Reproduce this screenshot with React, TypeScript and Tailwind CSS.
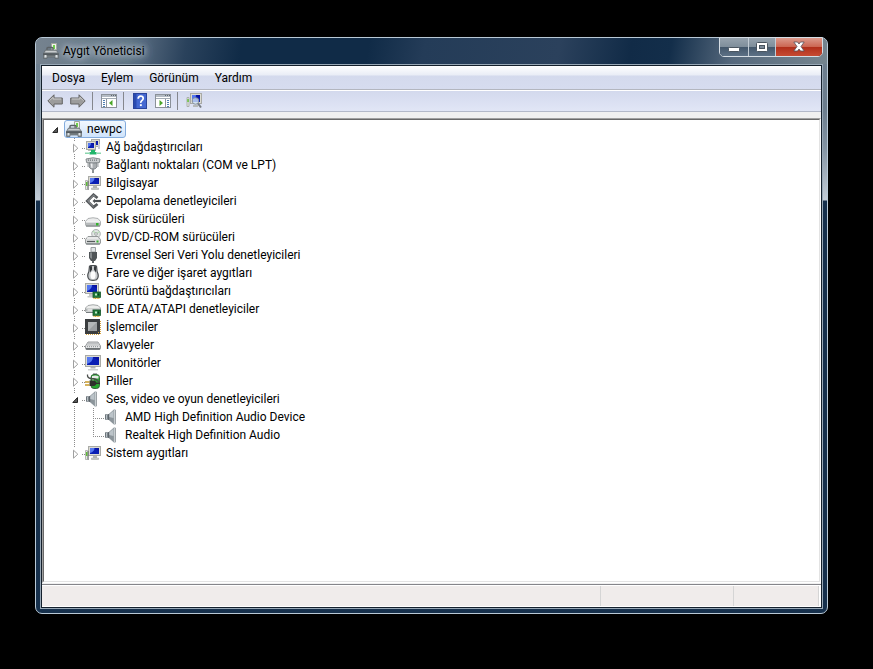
import { useState, type ReactNode } from 'react';

/* ---------- icons ---------- */

function Icon({ children, w = 16, h = 16 }: { children: ReactNode; w?: number; h?: number }) {
  return (
    <svg width={w} height={h} viewBox={`0 0 ${w} ${h}`} className="block shrink-0" aria-hidden="true">
      {children}
    </svg>
  );
}

function Screen({ x, y, w, h }: { x: number; y: number; w: number; h: number }) {
  return (
    <g>
      <rect x={x} y={y} width={w} height={h} fill="#dcdcd4" stroke="#a9aaa6" strokeWidth="1" />
      <rect x={x + 1.5} y={y + 1.5} width={w - 3} height={h - 3} fill="#0a1fb4" />
      <path d={`M${x + 1.5} ${y + 1.5}h${(w - 3) * 0.5}q0 ${(h - 3) * 0.6} -${(w - 3) * 0.5} ${h - 4}z`} fill="#5578f0" />
      <path d={`M${x + w * 0.5} ${y + 1.5}h${w * 0.5 - 1.5}v${h * 0.35}z`} fill="#0812a0" />
    </g>
  );
}

const Toolbox = () => (
  <Icon>
    <path d="M8.500.5h5v9h-5z" fill="#f1f3ec" stroke="#a3a69f" />
    <rect x="10" y="2" width="2" height="4" fill="#6fd04a" />
    <path d="M4 8V5.500q0-1 1-1h4q1 0 1 1V8" fill="none" stroke="#5c6266" strokeWidth="1.400" />
    <path d="M2.500 7h10.500l2.500 3.500H.5z" fill="#9da3a6" stroke="#666c70" strokeWidth=".8" />
    <path d="M0 10.300h16v2.200H0z" fill="#555c60" />
    <path d="M2.500 8.500h11" stroke="#c9cdcf" />
    <path d="M.5 12.500h15v3h-3.500v-1.500h-8v1.500H.5z" fill="#7f878b" stroke="#62686c" strokeWidth=".7" />
    <rect x="1.500" y="12" width="2" height="2.500" fill="#dfe3e5" />
    <rect x="12.500" y="12" width="2" height="2.500" fill="#dfe3e5" />
  </Icon>
);

const Network = () => (
  <Icon>
    <Screen x={6.5} y={0.5} w={8} h={7} />
    <rect x="13" y="5" width="2" height="5" fill="#c6c9d8" />
    <Screen x={1.5} y={2.5} w={9} h={8} />
    <rect x="3" y="11" width="8" height="1" fill="#b9bbb8" />
    <path d="M6 11h4v2H6zM4.500 13h7v2.500h-7z" fill="#20b56a" />
    <rect x="0" y="13.500" width="4" height="1.500" fill="#8bd5ad" />
    <rect x="12" y="13.500" width="4" height="1.500" fill="#8bd5ad" />
  </Icon>
);

const Port = () => (
  <Icon>
    <path d="M1 2q7-2.500 14 0l-.6 3.500q-6.400 1.500-12.800 0z" fill="#c9ccce" stroke="#7d8285" strokeWidth=".9" />
    <path d="M3 3.200h10" stroke="#70767a" strokeWidth="1.200" strokeDasharray="1 1" />
    <path d="M4 6h8v4l-2 2H6l-2-2z" fill="#a9adb0" stroke="#777c80" strokeWidth=".8" />
    <path d="M5.500 6.500h2v4.500h-1z" fill="#eff0f1" />
    <path d="M7 12h2v4H7z" fill="#8d9295" />
    <path d="M3 6v4M13 6v4" stroke="#a0a4a7" />
  </Icon>
);

const Computer = () => (
  <Icon>
    <Screen x={3.5} y={1.5} w={12} h={9} />
    <path d="M8 11h4v2H8z" fill="#b5b8b5" />
    <path d="M6.500 13h7v1.500h-7z" fill="#d0d2cf" stroke="#a6a9a6" strokeWidth=".6" />
    <path d="M.5 5.500h2v9h-2z" fill="#e6e8e4" stroke="#a6a9a5" strokeWidth=".8" />
    <rect x="1" y="7" width="1.500" height="4" fill="#5fbd35" />
    <rect x="2.700" y="6" width="1" height="9" fill="#74787a" />
  </Icon>
);

const Storage = () => (
  <Icon>
    <path d="M12.500 5L8.500 1.800 2.300 8l6.200 6.200L12.500 11" fill="none" stroke="#55595c" strokeWidth="2.800" strokeLinejoin="miter" />
    <path d="M10.500 3.800L8.500 2.200 2.700 8l5.800 5.800" fill="none" stroke="#a1a5a8" strokeWidth=".8" />
    <path d="M9 8h7" stroke="#4d5154" strokeWidth="2.200" />
    <path d="M10 5.800V10.200L7.500 8z" fill="#4d5154" />
  </Icon>
);

const Disk = () => (
  <Icon>
    <path d="M3 7.500q5-1.500 10 0l2.500 3v3.500q-.3 1-1.500 1H2q-1.200 0-1.500-1v-3.500z" fill="#eceded" stroke="#a5a8a9" strokeWidth=".9" />
    <path d="M.8 11.200h14.400v3H.8z" fill="#b7bbbc" />
    <path d="M1 11h14" stroke="#f7f7f7" />
    <path d="M1 15h14" stroke="#6f7476" />
    <rect x="11" y="12" width="2.500" height="2.500" fill="#35b32c" />
  </Icon>
);

const Optical = () => (
  <Icon>
    <circle cx="11" cy="4.800" r="4.300" fill="#e2e6e4" stroke="#a4a9a8" strokeWidth=".9" />
    <path d="M11 5L8 1.800M11 5l3.500-2.500" stroke="#b7ddb6" strokeWidth="1.200" />
    <circle cx="11" cy="5" r="1.300" fill="#fff" stroke="#8d9292" strokeWidth=".8" />
    <path d="M3 7.500h10l2.500 3v3.500l-1 1h-13l-1-1v-3.500z" fill="#d8dada" stroke="#8d9192" strokeWidth=".9" />
    <path d="M2 9h11" stroke="#f8f8f8" />
    <path d="M2 12.500h8" stroke="#54595b" strokeWidth="1.200" />
    <rect x="11.500" y="11.500" width="2" height="2" fill="#35b32c" />
    <path d="M1 15h14" stroke="#6f7476" />
  </Icon>
);

const Usb = () => (
  <Icon>
    <path d="M6 .5h4.500V5H6z" fill="#dfe3e5" stroke="#9a9ea1" />
    <path d="M4 5h8v6l-2 3H6l-2-3z" fill="#4f5457" />
    <path d="M5 5.500h2V12l-2-1.500z" fill="#84898c" />
    <path d="M7 14h2v2H7z" fill="#5e6366" />
  </Icon>
);

const Mouse = () => (
  <Icon>
    <path d="M4.500 1.200Q8-.6 11.500 1.200l.6 5.300q2.600 5.500-.6 8.200-3.500 1.300-7 0-3.200-2.700-.6-8.200z" fill="#c9ccce" stroke="#4a4e51" strokeWidth="1.200" />
    <path d="M5 1.300h2l.3 3L5 7.500zM11 1.300H9l-.3 3L11 7.500z" fill="#33373a" />
    <ellipse cx="8" cy="10.300" rx="2.500" ry="4" fill="#fdfdfd" />
    <rect x="7.400" y="2" width="1.200" height="3" fill="#d5d8da" />
  </Icon>
);

const Card = () => (
  <g>
    <rect x="8" y="9" width="7.500" height="5.500" fill="#1f7a38" stroke="#14562a" strokeWidth=".8" />
    <rect x="10" y="10.500" width="2" height="2" fill="#bfe8c6" />
    <rect x="13" y="10.500" width="1.200" height="2" fill="#0c3d1b" />
    <path d="M8.500 15.300h6.500" stroke="#d9a520" strokeWidth="1.200" strokeDasharray="1 .6" />
  </g>
);

const Display = () => (
  <Icon>
    <Screen x={0.5} y={0.5} w={13} h={10} />
    <path d="M4 11h5v2H4zM2.500 13h7v1.500h-7z" fill="#c6c9c7" />
    <Card />
  </Icon>
);

const Ide = () => (
  <Icon>
    <path d="M3 4.500q5-1.500 10 0L15.500 7v3.500l-1 1h-13l-1-1V7z" fill="#ecedec" stroke="#9b9e9f" strokeWidth=".9" />
    <path d="M.9 7.500h14.200v3H.9z" fill="#b2b6b7" />
    <path d="M2.500 9h5" stroke="#f5f5f5" strokeWidth="1.300" />
    <path d="M1 11.500h14" stroke="#777c7e" />
    <Card />
  </Icon>
);

const Cpu = () => (
  <Icon>
    <path d="M1 15.300h14M15.300 2v13" stroke="#d3a13e" strokeWidth="1.400" strokeDasharray="1 1" />
    <path d="M0 0h15v15H0z" fill="#3a3d3f" />
    <path d="M3 3h9v9H3z" fill="#9c9fa1" />
    <path d="M3 3h9L3 12z" fill="#b4b7b8" />
    <rect x="13" y="13" width="1" height="1" fill="#d3a13e" />
  </Icon>
);

const Keyboard = () => (
  <Icon>
    <path d="M3 5h10l2.500 4v2.500q-.2 1-1 1h-13q-.8 0-1-1V9z" fill="#e4e5e6" stroke="#8e9294" strokeWidth=".9" />
    <path d="M3.500 6.300h9.500M2.500 8h11.500M2 9.700h12.500" stroke="#7e8386" strokeWidth=".9" strokeDasharray="1 1" />
    <path d="M1 11.800h14" stroke="#4f5558" strokeWidth="1.200" />
  </Icon>
);

const Monitor = () => (
  <Icon>
    <Screen x={0.5} y={0.5} w={15} h={11} />
    <path d="M5.500 12h5v1.500h-5z" fill="#b1b5b4" />
    <path d="M3 14h10v1.500H3z" fill="#cdd0ce" />
  </Icon>
);

const Battery = () => (
  <Icon>
    <rect x="8" y="0" width="4" height="2" fill="#a8acae" />
    <rect x="6" y="1.500" width="8.500" height="14" rx="3" fill="#27a82f" stroke="#2f5a34" strokeWidth=".9" />
    <path d="M7 3q3-1 6.500 0v2.500H7z" fill="#e6ebe6" />
    <path d="M8 5v8" stroke="#a6eaa0" strokeWidth="1.300" />
    <path d="M2.500 1.500Q2 5 6 5.500q6 0 8 4" fill="none" stroke="#4a4d4b" strokeWidth="1.300" />
    <path d="M4.500 7.500h4q3 .5 3 2.800T8.500 13h-4z" fill="#2e312b" />
    <path d="M0 9h4.500M0 12h4.500" stroke="#c79a2c" strokeWidth="1.500" />
    <path d="M11 10.300h4" stroke="#2e312b" strokeWidth="1.400" />
  </Icon>
);

const Speaker = () => (
  <Icon>
    <path d="M1 5.300h4v5.400H1z" fill="#6c757b" />
    <path d="M2 6h1.200v4H2z" fill="#b9c0c5" />
    <path d="M4.500 5.300L10.500 0v16l-6-5.300z" fill="#8c959b" />
    <path d="M5 5.500L9.500 1.700V9L5 8z" fill="#bcc4c9" />
    <path d="M4.700 5v6" stroke="#4b5359" strokeWidth=".8" />
    <path d="M10.500 0v16" stroke="#c9cfd2" strokeWidth="1.200" />
    <path d="M11.500.8v14.500" stroke="#848c91" strokeWidth=".8" />
  </Icon>
);

const Arrow = ({ flip }: { flip?: boolean }) => (
  <Icon w={16} h={14}>
    <g transform={flip ? 'matrix(-1 0 0 1 16 0)' : undefined}>
      <path d="M.8 7L7 .8v3.200h8.300v6H7v3.200z" fill="#9c9c9c" stroke="#646464" />
      <path d="M2.500 6.700L6 3.200v1.800h8.200" fill="none" stroke="#c9c9c9" />
    </g>
  </Icon>
);

const Pane = ({ right }: { right?: boolean }) => (
  <Icon w={16} h={14}>
    <rect x=".5" y=".5" width="15" height="13" fill="#fff" stroke="#8b9199" />
    <rect x="1" y="1" width="14" height="2" fill="#b4bbc4" />
    <path d="M10 1.500h5" stroke="#5d6670" strokeDasharray="1 1" />
    <path d="M1 4.500h14" stroke="#a3abb5" />
    {right ? (
      <g>
        <path d="M10.500 5v8" stroke="#8e96a0" />
        <path d="M12 6.500h2M12 8.500h2M12 10.500h2M12 12.500h2" stroke="#4f7fb5" />
        <path d="M4.500 6v6L8 9z" fill="#4ba62a" />
      </g>
    ) : (
      <g>
        <path d="M5.500 5v8" stroke="#8e96a0" />
        <path d="M2 6.500h2M2 8.500h2M2 10.500h2M2 12.500h2" stroke="#4f7fb5" />
        <path d="M11.500 6v6L8 9z" fill="#4ba62a" />
      </g>
    )}
  </Icon>
);

const Help = () => (
  <Icon w={14} h={16}>
    <rect x=".5" y=".5" width="13" height="15" fill="#4468d2" stroke="#2a449c" />
    <path d="M1 1h2.500v14H1z" fill="#2b4bb0" />
    <path d="M5.200 5.800Q5.200 3.200 7.700 3.200t2.500 2.200q0 1.200-1.400 2.200-1.100.8-1 2.300" fill="none" stroke="#fff" strokeWidth="1.700" />
    <rect x="6.900" y="11.200" width="1.900" height="1.900" fill="#fff" />
  </Icon>
);

const Scan = () => (
  <Icon>
    <Screen x={4.5} y={0.5} w={11} h={10} />
    <path d="M7 12h5v2H7z" fill="#b7bab9" />
    <path d="M1 4.500h2v9H1z" fill="#e6e8e4" stroke="#a0a39f" strokeWidth=".8" />
    <rect x="1.300" y="6" width="1.500" height="3" fill="#67c23a" />
    <circle cx="9.500" cy="8" r="3.300" fill="#cfe4f7" fillOpacity=".8" stroke="#8b949c" />
    <path d="M12 10.500l3 4" stroke="#777d83" strokeWidth="2" />
  </Icon>
);

/* ---------- tree ---------- */

type Node = { label: string; icon: () => ReactNode; children?: string[] };

const nodes: Node[] = [
  { label: 'Ağ bağdaştırıcıları', icon: Network },
  { label: 'Bağlantı noktaları (COM ve LPT)', icon: Port },
  { label: 'Bilgisayar', icon: Computer },
  { label: 'Depolama denetleyicileri', icon: Storage },
  { label: 'Disk sürücüleri', icon: Disk },
  { label: 'DVD/CD-ROM sürücüleri', icon: Optical },
  { label: 'Evrensel Seri Veri Yolu denetleyicileri', icon: Usb },
  { label: 'Fare ve diğer işaret aygıtları', icon: Mouse },
  { label: 'Görüntü bağdaştırıcıları', icon: Display },
  { label: 'IDE ATA/ATAPI denetleyiciler', icon: Ide },
  { label: 'İşlemciler', icon: Cpu },
  { label: 'Klavyeler', icon: Keyboard },
  { label: 'Monitörler', icon: Monitor },
  { label: 'Piller', icon: Battery },
  {
    label: 'Ses, video ve oyun denetleyicileri',
    icon: Speaker,
    children: ['AMD High Definition Audio Device', 'Realtek High Definition Audio'],
  },
  { label: 'Sistem aygıtları', icon: Computer },
];

const OpenMark = () => (
  <Icon w={8} h={8}>
    <path d="M5.500 1.500v5H.8z" fill="#595959" stroke="#262626" />
  </Icon>
);

/* Expander of a category row, with the dotted stem that joins it to its neighbours. */
const Expander = ({ open, last }: { open: boolean; last: boolean }) => (
  <Icon w={8} h={18}>
    <path d={last ? 'M2.500 0v1M2.500 2v1' : 'M2.500 0v1M2.500 2v1M2.500 16v1'} stroke="#8c8c8c" />
    {open ? (
      <path d="M5.500 7.500v5H.8z" fill="#595959" stroke="#262626" />
    ) : (
      <path d="M1.500 6.200v8L5.800 10.200z" fill="#fff" stroke="#a0a0a0" />
    )}
  </Icon>
);

const Dots = ({ w, d }: { w: number; d: string }) => (
  <Icon w={w} h={18}>
    <path d={d} stroke="#8c8c8c" strokeDasharray="1 1" fill="none" />
  </Icon>
);

function Branch({ node, last }: { node: Node; last: boolean }) {
  const [open, setOpen] = useState(Boolean(node.children));
  const Glyph = node.icon;
  return (
    <li>
      <div className="flex h-[18px] items-center">
        <button
          type="button"
          aria-label={node.label}
          aria-expanded={open}
          onClick={() => setOpen(!open)}
          className="w-2.5"
        >
          <Expander open={open} last={last} />
        </button>
        <Dots w={3} d="M0 10.5h3" />
        <Glyph />
        <span className="pl-[5px]">{node.label}</span>
      </div>
      {open && node.children && (
        <ul>
          {node.children.map((child, i) => (
            <li key={child} className="flex h-[18px] items-center pl-0.5">
              <Dots
                w={30}
                d={i === node.children!.length - 1 ? 'M.5 0v18M19.5 0v10M19 10.5h11' : 'M.5 0v18M19.5 0v18M19 10.5h11'}
              />
              <Speaker />
              <span className="pl-[5px]">{child}</span>
            </li>
          ))}
        </ul>
      )}
    </li>
  );
}

/* ---------- window ---------- */

const Separator = () => <span className="mr-1 ml-0.5 h-[18px] w-px bg-[#85878d]" />;

function Tool({ label, children }: { label: string; children: ReactNode }) {
  return (
    <button type="button" aria-label={label} className="flex h-5 w-[22px] items-center justify-center">
      {children}
    </button>
  );
}

export default function App() {
  return (
    <div className="flex min-h-screen bg-black pt-[37px] pr-[45px] pb-[55px] pl-[35px] font-[Roboto,'Open_Sans',sans-serif] text-xs leading-[18px] text-black">
      <main className="flex flex-1 flex-col rounded-[7px] border border-[#b9c9d6] bg-[#16304c] bg-[linear-gradient(180deg,#6f8090_0,#6c7d8d_70px,#8494a3_110px,#c3ccd6_162px,#16304c_163px)]">
        <header className="flex h-[26px] items-start justify-between rounded-t-[6px] bg-[linear-gradient(100deg,#76838f_0%,#5f7184_12%,#2a425c_19%,#102b47_26%,#102b47_42%,#243c58_49%,#2b415c_66%,#112b47_75%,#132e4a_80%,#56697d_88%,#75858f_100%)] pl-[7px]">
          <div className="flex items-center gap-1 pt-1">
            <Toolbox />
            <h1 className="font-normal [text-shadow:0_0_5px_#b4c0ca,0_0_8px_#b4c0ca,0_0_10px_#aab6c1,0_0_14px_#aab6c1]">Aygıt Yöneticisi</h1>
          </div>
          <div className="mr-1 -mt-px flex h-5 rounded-b-[5px] border border-[#d5dde4] bg-[#1c2b3a]">
            <button
              type="button"
              aria-label="Simge durumuna küçült"
              className="flex w-[29px] items-center justify-center rounded-bl-[4px] border-r border-[#c2ccd5] bg-[linear-gradient(180deg,#96a3ae_0%,#7f8e9b_48%,#42566a_50%,#5d7186_100%)]"
            >
              <Icon w={12} h={12}>
                <rect x=".5" y="6.500" width="11" height="4" rx="1" fill="#fff" stroke="#4a5560" />
              </Icon>
            </button>
            <button
              type="button"
              aria-label="Ekranı kapla"
              className="flex w-[27px] items-center justify-center border-r border-[#c2ccd5] bg-[linear-gradient(180deg,#96a3ae_0%,#7f8e9b_48%,#42566a_50%,#5d7186_100%)]"
            >
              <Icon w={12} h={11}>
                <rect x=".5" y=".5" width="11" height="9" rx="1" fill="#fff" stroke="#4a5560" />
                <rect x="3.500" y="3.500" width="5" height="3" fill="#7c8a98" stroke="#4a5560" />
              </Icon>
            </button>
            <button
              type="button"
              aria-label="Kapat"
              className="flex w-[46px] items-center justify-center rounded-br-[4px] bg-[linear-gradient(180deg,#dc9a8c_0%,#cc6753_48%,#b02e1a_50%,#c64a32_100%)]"
            >
              <Icon w={12} h={12}>
                <path d="M.8 1h3.700L6 3l1.500-2h3.700L8 5.500 11.200 10H7.500L6 8l-1.500 2H.8L4 5.500z" fill="#fff" stroke="#54505a" strokeWidth=".8" />
              </Icon>
            </button>
          </div>
        </header>

        <section className="mx-1 mb-1 flex flex-1 flex-col border border-[#98a8b6]">
          <div className="flex flex-1 flex-col border border-[#14202c] bg-[#f0f0f0]">
            <nav className="flex h-6 border-b border-[#b3b6bf] bg-[linear-gradient(180deg,#ffffff_0,#e9edf6_9px,#d4daed_10px,#d6dcef_100%)] px-0.5">
              {['Dosya', 'Eylem', 'Görünüm', 'Yardım'].map((item) => (
                <button key={item} type="button" className="px-2">
                  {item}
                </button>
              ))}
            </nav>
            <div className="flex h-[22px] items-center gap-px border-t border-b border-t-white border-b-[#b3b9c9] bg-[linear-gradient(180deg,#d3d9ed,#e1e6f6)] px-0.5">
              <Tool label="Geri"><Arrow /></Tool>
              <Tool label="İleri"><Arrow flip /></Tool>
              <Separator />
              <Tool label="Konsol ağacını göster"><Pane /></Tool>
              <Separator />
              <Tool label="Yardım"><Help /></Tool>
              <Tool label="Eylem bölmesini göster"><Pane right /></Tool>
              <Separator />
              <Tool label="Donanım değişikliklerini tara"><Scan /></Tool>
            </div>

            <div className="mt-1.5 flex flex-1 flex-col border border-t-[#a0a0a0] border-r-white border-b-white border-l-[#a0a0a0]">
              <div className="flex-1 border border-t-[#696969] border-r-[#e3e3e3] border-b-[#e3e3e3] border-l-[#696969] bg-white">
                <div className="flex h-[18px] items-center pl-2">
                  <button type="button" aria-label="newpc" aria-expanded="true" className="w-3 pt-0.5">
                    <OpenMark />
                  </button>
                  <div className="flex h-[18px] items-center rounded-[3px] border border-[#84acdd] bg-[linear-gradient(180deg,#f2f8fe,#cfe3fb)] pr-[3px] pl-px">
                    <Toolbox />
                    <span className="pl-[5px]">newpc</span>
                  </div>
                </div>
                <ul className="pl-7">
                  {nodes.map((node, i) => (
                    <Branch key={node.label} node={node} last={i === nodes.length - 1} />
                  ))}
                </ul>
              </div>
            </div>

            <footer className="mt-px flex h-[23px] border-t border-b border-t-[#85858a] border-b-white bg-white pt-px pr-0.5">
              <div className="flex-1 border-r border-[#d5d5d5] bg-[#f0eceb]" />
              <div className="w-[133px] border-r border-[#d5d5d5] bg-[#f0eceb]" />
              <div className="w-[85px] border-r border-[#d5d5d5] bg-[#f0eceb]" />
            </footer>
          </div>
        </section>
      </main>
    </div>
  );
}
